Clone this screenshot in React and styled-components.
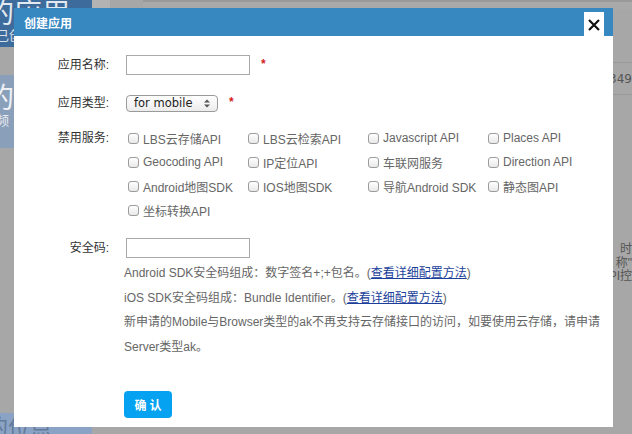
import React from 'react';
import styled, { createGlobalStyle } from 'styled-components';

const Global = createGlobalStyle`
  html, body {
    margin: 0;
    padding: 0;
  }
  body {
    font-family: "Liberation Sans", "Noto Sans CJK SC", sans-serif;
    font-size: 12px;
  }
`;

const Screen = styled.div`
  position: relative;
  width: 632px;
  height: 434px;
  overflow: hidden;
  background: #a7a7a7;
  display: flex;
`;

const Sidebar = styled.div`
  width: 92px;
  flex: none;
  display: flex;
  flex-direction: column;
`;

const SideBlock = styled.div`
  height: ${props => props.h}px;
  background: ${props => props.bg};
  color: ${props => props.fg || '#fff'};
  overflow: hidden;
  white-space: nowrap;
  padding-top: ${props => props.pt || 0}px;
  box-sizing: border-box;
`;

const BigText = styled.div`
  font-size: ${props => props.size || 28}px;
  line-height: 28px;
  margin-left: -14px;
  opacity: 0.85;
`;

const SmallText = styled.div`
  font-size: 13px;
  line-height: 16px;
  margin-left: -4px;
  opacity: 0.8;
`;

const Spacer = styled.div`
  flex: 1;
`;

const Main = styled.div`
  flex: 1;
  display: flex;
  flex-direction: column;
`;

const TopStrip = styled.div`
  height: 10px;
  display: flex;
`;

const StripPart = styled.div`
  width: ${props => props.w ? props.w + 'px' : 'auto'};
  flex: ${props => props.w ? 'none' : 1};
  background: ${props => props.bg};
  border-top: ${props => props.line ? '2px solid #9a9a9a' : 'none'};
`;

const TableRow = styled.div`
  height: 31px;
  border-bottom: 1px solid #999;
  display: flex;
  align-items: center;
  justify-content: flex-end;
  color: #555;
  font-family: "DejaVu Sans", sans-serif;
  font-size: 12px;
  margin-top: ${props => props.mt || 0}px;
`;

const Notes = styled.div`
  margin-top: 148px;
  display: flex;
  flex-direction: column;
  align-items: flex-end;
  color: #555;
  line-height: 13.5px;
  font-size: 12px;
`;

const Modal = styled.div`
  position: absolute;
  left: 14px;
  top: 8px;
  width: 599px;
  height: 419px;
  background: #fff;
  display: flex;
  flex-direction: column;
`;

const Header = styled.div`
  position: relative;
  height: 28px;
  background: #3787c0;
  color: #fff;
  font-weight: bold;
  font-size: 12px;
  display: flex;
  align-items: center;
  padding-left: 10px;
  flex: none;
`;

const Close = styled.button`
  position: absolute;
  right: 9px;
  top: 4px;
  width: 20px;
  height: 25px;
  border: 0;
  padding: 0;
  background: #fff;
  display: flex;
  align-items: center;
  justify-content: center;
`;

const Form = styled.div`
  padding-top: 19px;
  display: flex;
  flex-direction: column;
`;

const Row = styled.div`
  display: flex;
  align-items: ${props => props.top ? 'flex-start' : 'center'};
  margin-top: ${props => props.mt || 0}px;
`;

const Label = styled.div`
  width: 95px;
  flex: none;
  text-align: right;
  color: #333;
  font-size: 12px;
  line-height: ${props => props.lh || 20}px;
  margin-right: 17px;
`;

const TextInput = styled.input`
  width: 124px;
  height: 20px;
  box-sizing: border-box;
  border: 1px solid #a9a9a9;
  outline: none;
  margin: 0;
  padding: 0 4px;
`;

const Star = styled.span`
  color: #d21f1f;
  font-weight: bold;
  font-size: 12px;
  margin-left: ${props => props.ml}px;
  margin-top: -2px;
`;

const SelectBox = styled.div`
  position: relative;
  width: 92px;
  height: 17px;
  box-sizing: border-box;
  border: 1px solid #9a9a9a;
  border-radius: 4px;
  background: linear-gradient(#ffffff, #ececec);
  display: flex;
  align-items: center;
  padding-left: 7px;
  color: #222;
  font-family: "DejaVu Sans", sans-serif;
  font-size: 11.5px;
`;

const Arrows = styled.svg`
  position: absolute;
  right: 7px;
  top: 3px;
`;

const Services = styled.div`
  display: grid;
  grid-template-columns: repeat(4, 120px);
  margin-left: 2px;
`;

const Service = styled.label`
  display: flex;
  align-items: center;
  height: 24px;
  color: #666;
  font-size: 12px;
  white-space: nowrap;
`;

const Check = styled.input`
  appearance: none;
  width: 11px;
  height: 11px;
  margin: 0 4px 0 0;
  border: 1px solid #9c9c9c;
  border-radius: 3px;
  background: linear-gradient(#fff, #e8e8e8);
  box-sizing: border-box;
`;

const Help = styled.div`
  margin: 3px 0 0 110px;
  width: 480px;
  color: #666;
  font-size: 12px;
  line-height: 24.5px;
`;

const Link = styled.a`
  color: #1b3f9a;
  text-decoration: underline;
`;

const Confirm = styled.button`
  margin: 32px 0 0 110px;
  width: 48px;
  height: 27px;
  border: 0;
  border-radius: 4px;
  background: #06a2f2;
  color: #fff;
  font-weight: bold;
  font-size: 12px;
  font-family: inherit;
  letter-spacing: 3px;
  padding: 0 0 0 3px;
  align-self: flex-start;
`;

const services = [
  'LBS云存储API', 'LBS云检索API', 'Javascript API', 'Places API',
  'Geocoding API', 'IP定位API', '车联网服务', 'Direction API',
  'Android地图SDK', 'IOS地图SDK', '导航Android SDK', '静态图API',
  '坐标转换API',
];

export default function App() {
  return (
    <>
      <Global />
      <Screen>
        <Sidebar>
          <SideBlock h={47} bg="#3d6b9c">
            <BigText>的应用</BigText>
            <SmallText>已创</SmallText>
          </SideBlock>
          <SideBlock h={28} bg="#a7a7a7" />
          <SideBlock h={73} bg="#8aa0ba" pt={10}>
            <BigText>的</BigText>
            <SmallText>频</SmallText>
          </SideBlock>
          <Spacer />
          <SideBlock h={21} bg="#8aa3c4" fg="#5d7494" pt={1}>
            <BigText size={22}>的位点</BigText>
          </SideBlock>
        </Sidebar>
        <Main>
          <TopStrip>
            <StripPart w={18} bg="#b3b3b3" />
            <StripPart w={33} bg="#a7a7a7" />
            <StripPart bg="#a9a9a9" line />
          </TopStrip>
          <TableRow mt={21}>&nbsp;</TableRow>
          <TableRow>349</TableRow>
          <Notes>
            <span>】时</span>
            <span>称"</span>
            <span>PI控</span>
          </Notes>
        </Main>

        <Modal>
          <Header>
            创建应用
            <Close>
              <svg width="14" height="14" viewBox="0 0 14 14">
                <path d="M2 2L12 12M12 2L2 12" stroke="#111" strokeWidth="2.2" />
              </svg>
            </Close>
          </Header>
          <Form>
            <Row>
              <Label>应用名称:</Label>
              <TextInput />
              <Star ml={11}>*</Star>
            </Row>
            <Row mt={18}>
              <Label>应用类型:</Label>
              <SelectBox>
                for mobile
                <Arrows width="6" height="9" viewBox="0 0 6 9">
                  <path d="M0 3.5L3 0.5L6 3.5Z M0 5.5L3 8.5L6 5.5Z" fill="#555" />
                </Arrows>
              </SelectBox>
              <Star ml={11}>*</Star>
            </Row>
            <Row mt={13} top>
              <Label lh={24}>禁用服务:</Label>
              <Services>
                {services.map(s => (
                  <Service key={s}>
                    <Check type="checkbox" />
                    {s}
                  </Service>
                ))}
              </Services>
            </Row>
            <Row mt={16}>
              <Label>安全码:</Label>
              <TextInput />
            </Row>
            <Help>
              Android SDK安全码组成：数字签名+;+包名。(<Link>查看详细配置方法</Link>)<br />
              iOS SDK安全码组成：Bundle Identifier。(<Link>查看详细配置方法</Link>)<br />
              新申请的Mobile与Browser类型的ak不再支持云存储接口的访问，如要使用云存储，请申请<br />
              Server类型ak。
            </Help>
            <Confirm>确认</Confirm>
          </Form>
        </Modal>
      </Screen>
    </>
  );
}
